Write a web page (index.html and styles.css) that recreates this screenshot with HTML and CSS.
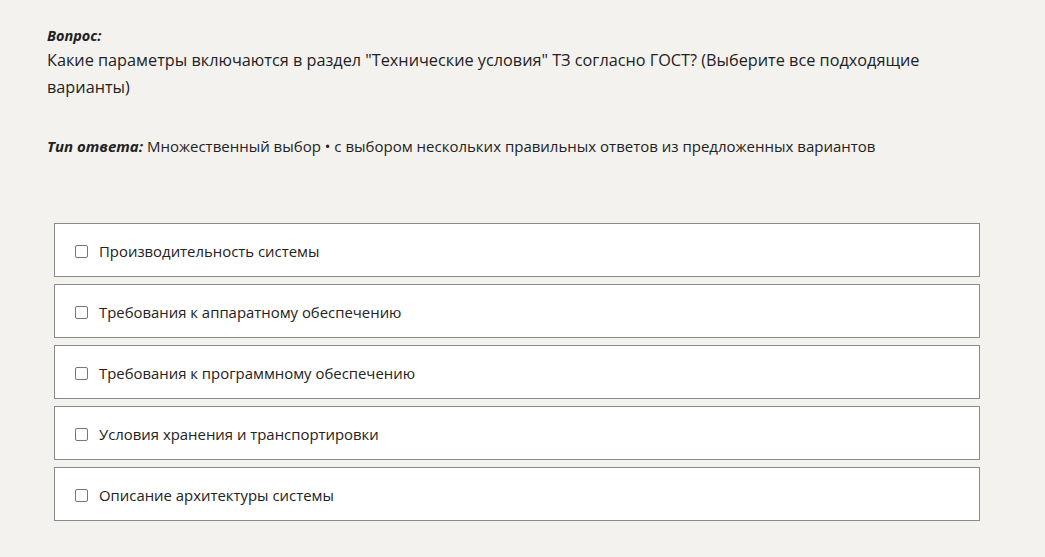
FILE: index.html
```html
<!DOCTYPE html>
<html lang="ru">
<head>
<meta charset="utf-8">
<link rel="stylesheet" href="styles.css">
</head>
<body>
<div class="page">
  <div class="label">Вопрос:</div>
  <div class="question">Какие параметры включаются в раздел "Технические условия" ТЗ согласно ГОСТ? (Выберите все подходящие варианты)</div>
  <div class="type"><span class="type-label">Тип ответа:</span> Множественный выбор • с выбором нескольких правильных ответов из предложенных вариантов</div>
  <div class="options">
    <label class="option"><span class="box"></span><span class="opt-text">Производительность системы</span></label>
    <label class="option"><span class="box"></span><span class="opt-text">Требования к аппаратному обеспечению</span></label>
    <label class="option"><span class="box"></span><span class="opt-text">Требования к программному обеспечению</span></label>
    <label class="option"><span class="box"></span><span class="opt-text">Условия хранения и транспортировки</span></label>
    <label class="option"><span class="box"></span><span class="opt-text">Описание архитектуры системы</span></label>
  </div>
</div>
</body>
</html>
```
FILE: styles.css
```css
html, body {
  margin: 0;
  padding: 0;
  background: #f3f2ef;
}
body {
  font-family: "Open Sans", "Noto Sans", sans-serif;
  color: #222;
}
.page {
  padding: 24px 65px 0 47px;
}
.label {
  font-size: 14.5px;
  line-height: 24px;
  font-weight: 700;
  font-style: italic;
}
.question {
  font-size: 16.25px;
  line-height: 27px;
  margin-top: -1px;
  width: 890px;
}
.type {
  margin-top: 32px;
  font-size: 15px;
  line-height: 27px;
}
.type-label {
  font-weight: 700;
  font-style: italic;
}
.options {
  margin-top: 63px;
  margin-left: 7px;
  display: flex;
  flex-direction: column;
  gap: 7px;
}
.option {
  display: flex;
  align-items: center;
  height: 52px;
  box-sizing: border-box;
  height: 54px;
  padding-top: 2px;
  background: #fff;
  border: 1px solid #8a8a8a;
  padding-left: 20px;
  font-size: 14.9px;
}
.box {
  width: 11px;
  height: 11px;
  border: 1px solid #767676;
  border-radius: 2px;
  background: #fff;
  flex: none;
}
.opt-text {
  margin-left: 11px;
  color: #222;
}
```
